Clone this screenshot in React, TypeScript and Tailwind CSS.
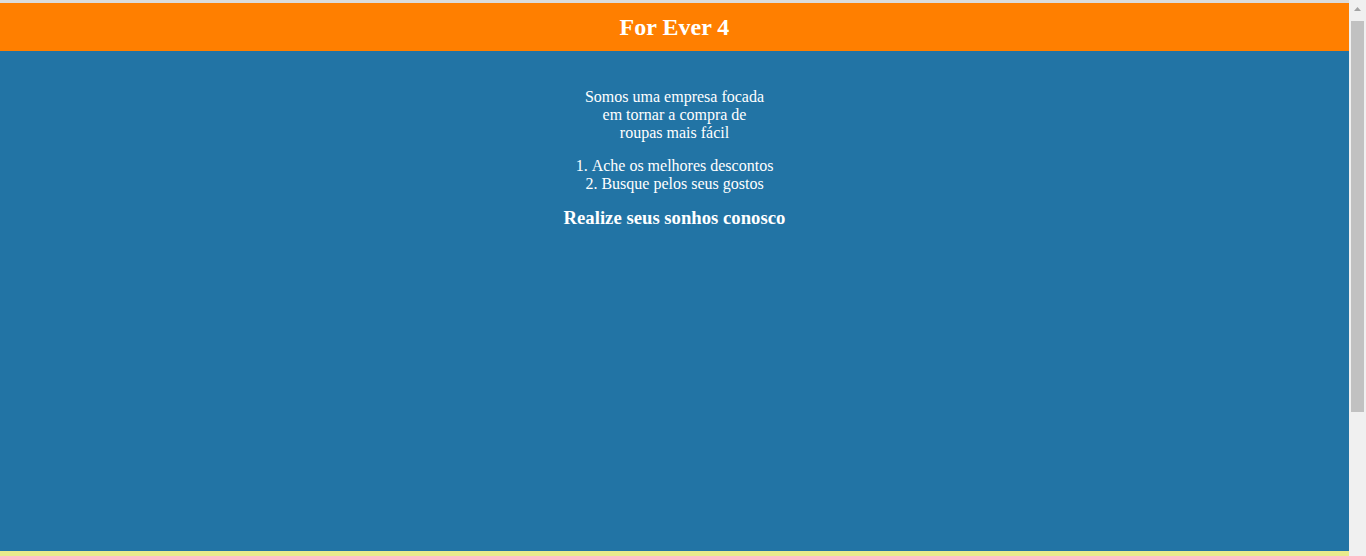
export default function App() {
  return (
    <div className="flex h-[556px] overflow-hidden bg-[#f0f0f0] font-['Liberation_Serif','Times_New_Roman',serif]">
      {/* PAGE */}
      <div className="flex flex-1 flex-col">
        <div className="h-[3px] bg-[#dcdcdc]" />
        <header className="flex h-[48px] items-center justify-center bg-[#ff7f00]">
          <h1 className="text-[24px] font-bold leading-[28px] text-white">For Ever 4</h1>
        </header>
        <main className="flex h-[500px] flex-col items-center bg-[#2274a5] pt-[37px] text-center text-white">
          <p className="w-[186px] text-[16px] leading-[18px]">
            Somos uma empresa focada em tornar a compra de roupas mais fácil
          </p>
          <ol className="mt-[15px] list-inside list-decimal text-[16px] leading-[18px]">
            <li>Ache os melhores descontos</li>
            <li>Busque pelos seus gostos</li>
          </ol>
          <h3 className="mt-[14px] text-[18.72px] font-bold leading-[22px]">Realize seus sonhos conosco</h3>
        </main>
        <footer className="flex-1 bg-[#e9eb8d]" />
      </div>

      {/* SCROLLBAR */}
      <div className="flex w-[17px] flex-col items-center bg-[#f0f0f0]">
        <div className="flex h-[17px] items-center justify-center">
          <svg width="7" height="4" viewBox="0 0 7 4">
            <path d="M3.5 0 L7 4 L0 4 Z" fill="#a3a3a3" />
          </svg>
        </div>
        <div className="mt-[4px] h-[391px] w-[13px] bg-[#c1c1c1]" />
      </div>
    </div>
  )
}
